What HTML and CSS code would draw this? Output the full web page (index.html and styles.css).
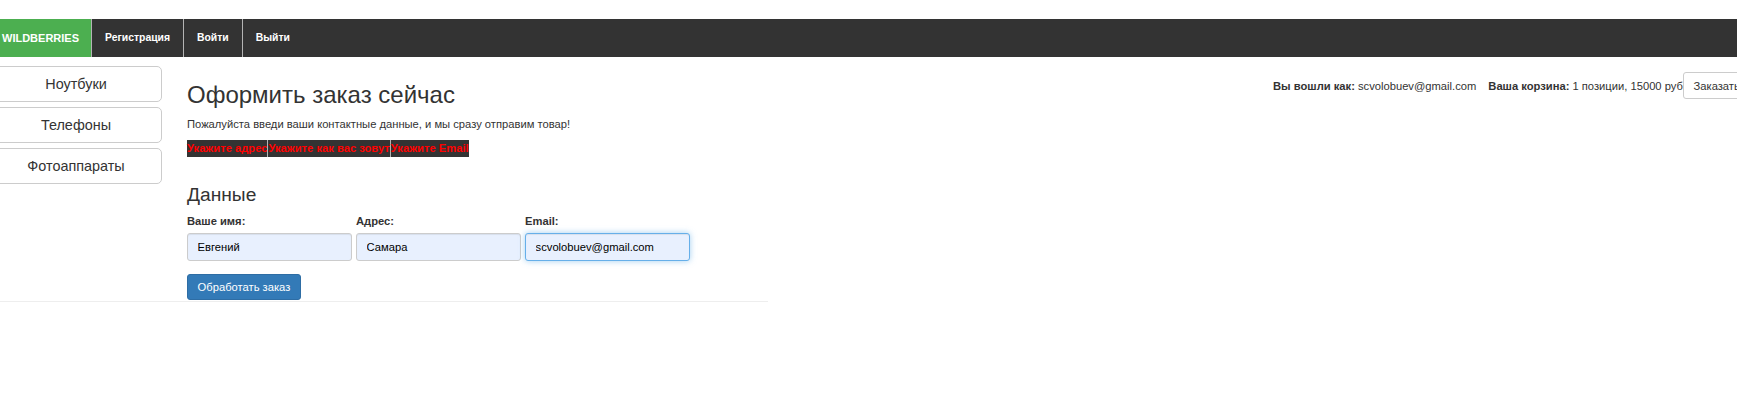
FILE: index.html
```html
<!DOCTYPE html>
<html lang="ru">
<head>
<meta charset="utf-8">
<title>Оформить заказ</title>
<link rel="stylesheet" href="styles.css">
</head>
<body>
<div class="top-space"></div>
<nav class="navbar">
  <a class="brand" href="#">WILDBERRIES</a>
  <a class="nav-item" href="#">Регистрация</a>
  <a class="nav-item" href="#">Войти</a>
  <a class="nav-item" href="#">Выйти</a>
</nav>
<div class="page">
  <div class="content">
    <div class="side">
      <a class="cat-btn" href="#">Ноутбуки</a>
      <a class="cat-btn" href="#">Телефоны</a>
      <a class="cat-btn" href="#">Фотоаппараты</a>
    </div>
    <div class="main">
      <h2 class="title">Оформить заказ сейчас</h2>
      <p class="lead-text">Пожалуйста введи ваши контактные данные, и мы сразу отправим товар!</p>
      <div class="errors">
        <span class="err">Укажите адрес</span><span class="err">Укажите как вас зовут</span><span class="err">Укажите Email</span>
      </div>
      <h3 class="subtitle">Данные</h3>
      <form class="form">
        <div class="fields">
          <div class="field">
            <label class="label">Ваше имя:</label>
            <input class="input" type="text" value="Евгений">
          </div>
          <div class="field">
            <label class="label">Адрес:</label>
            <input class="input" type="text" value="Самара">
          </div>
          <div class="field">
            <label class="label">Email:</label>
            <input class="input input-focus" type="text" value="scvolobuev@gmail.com">
          </div>
        </div>
        <button class="btn-primary" type="button">Обработать заказ</button>
      </form>
    </div>
  </div>
  <div class="account">
    <span class="acc-item"><b>Вы вошли как:</b> scvolobuev@gmail.com</span>
    <span class="acc-item cart"><b>Ваша корзина:</b> 1 позиции, 15000 руб</span>
    <a class="btn-order" href="#">Заказать</a>
  </div>
</div>
</body>
</html>
```

FILE: styles.css
```css
html, body {
  margin: 0;
  padding: 0;
}
body {
  font-family: "Liberation Sans", Arial, sans-serif;
  font-size: 11.2px;
  line-height: 16px;
  color: #333;
  background: #fff;
  overflow: hidden;
  width: 1737px;
}
a { text-decoration: none; }

.top-space { height: 19px; }

.navbar {
  display: flex;
  height: 38px;
  background: #333;
}
.brand {
  display: flex;
  align-items: center;
  box-sizing: border-box;
  width: 91px;
  padding-left: 2px;
  background: #4caf50;
  color: #fff;
  font-weight: bold;
  font-size: 11px;
}
.nav-item {
  display: flex;
  align-items: center;
  padding: 0 13px 0 13px;
  border-left: 1px solid #b4b4b4;
  color: #fff;
  font-weight: bold;
  font-size: 10.4px;
}

.page {
  display: flex;
  align-items: flex-start;
}
.content {
  display: flex;
  width: 768px;
  flex: none;
  border-bottom: 1px solid #eeeeee;
}
.side {
  display: flex;
  flex-direction: column;
  gap: 5px;
  width: 172px;
  margin-left: -10px;
  padding-top: 9px;
  flex: none;
}
.cat-btn {
  display: flex;
  align-items: center;
  justify-content: center;
  box-sizing: border-box;
  height: 36px;
  border: 1px solid #ccc;
  border-radius: 5px;
  background: #fff;
  color: #333;
  font-size: 14.4px;
}
.main {
  margin-left: 25px;
  flex: 1;
  padding-bottom: 1px;
}
.title {
  margin: 25px 0 8px;
  font-size: 24px;
  line-height: 26.4px;
  font-weight: 500;
  color: #333;
}
.lead-text {
  margin: 0 0 8px;
  font-size: 11.2px;
  line-height: 16px;
}
.errors {
  display: inline-flex;
  height: 17px;
  background: #333;
}
.err {
  display: block;
  color: #ff0000;
  font-weight: bold;
  font-size: 11.2px;
  line-height: 17px;
}
.err + .err {
  border-left: 1px solid #b4b4b4;
}
.subtitle {
  margin: 27px 0 8px;
  font-size: 19.2px;
  line-height: 21px;
  font-weight: 500;
  color: #333;
}
.form { margin: 0; }
.fields {
  display: grid;
  grid-template-columns: 165px 165px 165px;
  column-gap: 4px;
}
.field {
  display: flex;
  flex-direction: column;
}
.label {
  display: block;
  font-weight: bold;
  font-size: 11.2px;
  line-height: 16px;
  margin-bottom: 4px;
}
.input {
  box-sizing: border-box;
  height: 27.4px;
  width: 100%;
  margin: 0;
  padding: 0 9.6px;
  border: 1px solid #ccc;
  border-radius: 3px;
  background: #e8f0fe;
  font-family: "Liberation Sans", Arial, sans-serif;
  font-size: 11.2px;
  color: #000;
  box-shadow: inset 0 1px 1px rgba(0,0,0,0.075);
  outline: none;
}
.input-focus {
  border-color: #66afe9;
  box-shadow: inset 0 1px 1px rgba(0,0,0,0.075), 0 0 6px rgba(102,175,233,0.6);
}
.btn-primary {
  display: block;
  box-sizing: border-box;
  height: 25.6px;
  margin-top: 13.6px;
  padding: 0 9.6px;
  border: 1px solid #2e6da4;
  border-radius: 3px;
  background: #337ab7;
  color: #fff;
  font-family: "Liberation Sans", Arial, sans-serif;
  font-size: 11.2px;
}

.account {
  display: flex;
  align-items: center;
  flex: none;
  margin-left: 505px;
  margin-top: 15px;
  white-space: nowrap;
}
.acc-item b { font-weight: bold; }
.cart { margin-left: 12px; }
.btn-order {
  display: flex;
  align-items: center;
  box-sizing: border-box;
  height: 27px;
  padding: 0 9.6px;
  border: 1px solid #ccc;
  border-radius: 3px;
  background: #fff;
  color: #333;
  font-size: 11.2px;
}
```
